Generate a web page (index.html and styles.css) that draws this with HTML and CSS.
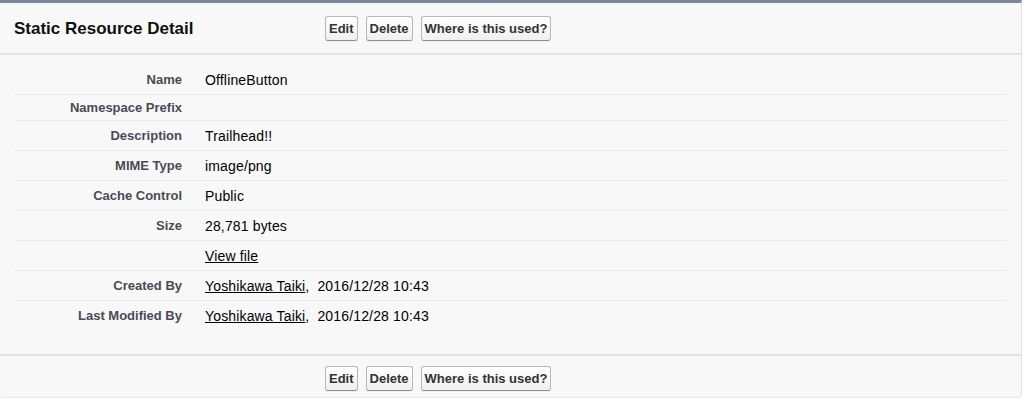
FILE: index.html
```html
<!DOCTYPE html>
<html>
<head>
<meta charset="utf-8">
<link rel="stylesheet" href="styles.css">
</head>
<body>
<div class="panel">
  <div class="pb-header">
    <h2 class="pb-title">Static Resource Detail</h2>
    <div class="pb-buttons">
      <button class="btn">Edit</button>
      <button class="btn">Delete</button>
      <button class="btn">Where is this used?</button>
    </div>
  </div>
  <div class="pb-body">
    <table class="detail">
      <tr><td class="label">Name</td><td class="value">OfflineButton</td></tr>
      <tr><td class="label">Namespace Prefix</td><td class="value empty"></td></tr>
      <tr><td class="label">Description</td><td class="value">Trailhead!!</td></tr>
      <tr><td class="label">MIME Type</td><td class="value">image/png</td></tr>
      <tr><td class="label">Cache Control</td><td class="value">Public</td></tr>
      <tr><td class="label">Size</td><td class="value">28,781 bytes</td></tr>
      <tr><td class="label"></td><td class="value"><a class="link" href="#">View file</a></td></tr>
      <tr><td class="label">Created By</td><td class="value"><a class="link" href="#">Yoshikawa Taiki</a>,&nbsp; 2016/12/28 10:43</td></tr>
      <tr class="last"><td class="label">Last Modified By</td><td class="value"><a class="link" href="#">Yoshikawa Taiki</a>,&nbsp; 2016/12/28 10:43</td></tr>
    </table>
  </div>
  <div class="pb-footer">
    <div class="pb-buttons">
      <button class="btn">Edit</button>
      <button class="btn">Delete</button>
      <button class="btn">Where is this used?</button>
    </div>
  </div>
</div>
</body>
</html>
```

FILE: styles.css
```css
html, body {
  margin: 0;
  padding: 0;
  background: #ffffff;
}

body {
  font-family: "Liberation Sans", Arial, Helvetica, sans-serif;
  color: #000;
}

.panel {
  width: 1021px;
  height: 394px;
  background: #f8f8f8;
  border-top: 3px solid #7c86a1;
  border-right: 1px solid #e2e2e2;
  border-bottom: 1px solid #e6e6e6;
  border-radius: 0 0 4px 4px;
  display: flex;
  flex-direction: column;
  box-sizing: content-box;
}

.pb-header {
  height: 50px;
  flex: none;
  display: flex;
  align-items: center;
  border-bottom: 2px solid #e3e3e3;
  padding-left: 14px;
}

.pb-title {
  margin: 0;
  width: 311px;
  font-size: 17px;
  font-weight: bold;
  color: #111;
  padding-top: 1px;
}

.pb-buttons {
  display: flex;
  gap: 8px;
}

.btn {
  height: 25px;
  padding: 0 3px;
  font-family: "Liberation Sans", Arial, Helvetica, sans-serif;
  font-size: 13px;
  font-weight: bold;
  color: #333;
  background: linear-gradient(#ffffff, #f0f0f0);
  border: 1px solid #b8b8b8;
  border-bottom-color: #8f8f8f;
  border-radius: 3px;
  box-shadow: 0 1px 0 rgba(0,0,0,0.04);
  cursor: pointer;
}

.pb-body {
  flex: none;
  padding: 10px 14px 0 14px;
  height: 289px;
}

.detail {
  width: 993px;
  border-collapse: collapse;
}

.detail td {
  border-bottom: 1px solid #ebebeb;
  vertical-align: middle;
}

.detail tr.last td {
  border-bottom: none;
}

.label {
  width: 168px;
  text-align: right;
  font-size: 13px;
  font-weight: bold;
  color: #4a4a56;
  line-height: 16px;
  padding: 5px 0 4px 0;
}

.value {
  padding: 5px 0 4px 23px;
  font-size: 14px;
  line-height: 20px;
  color: #000;
  letter-spacing: 0.15px;
}

.value.empty {
  line-height: 16px;
}

.link {
  color: #000;
  text-decoration: underline;
}

.pb-footer {
  flex: 1;
  border-top: 2px solid #e3e3e3;
  padding: 10px 0 0 325px;
}
```
